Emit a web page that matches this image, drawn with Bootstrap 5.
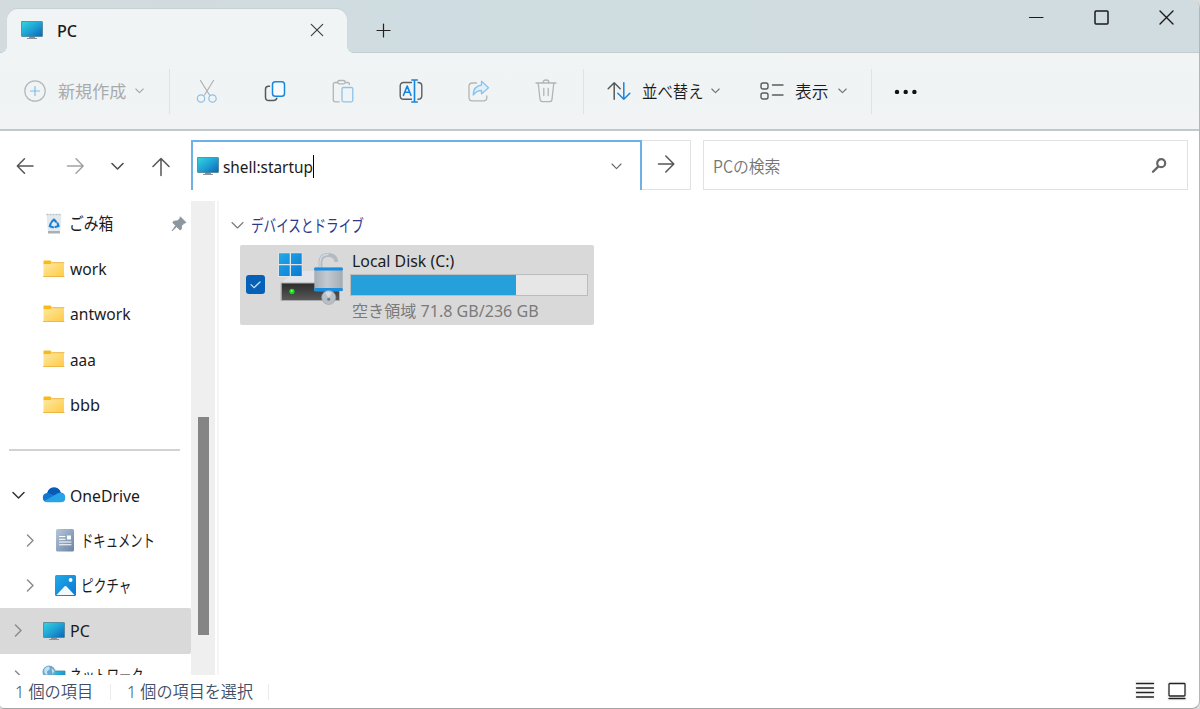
<!DOCTYPE html>
<html lang="ja">
<head>
<meta charset="utf-8">
<meta name="viewport" content="width=device-width, initial-scale=1">
<title>PC</title>
<link href="https://cdn.jsdelivr.net/npm/bootstrap@5.3.0/dist/css/bootstrap.min.css" rel="stylesheet">
<style>
  html, body { height: 100%; }
  body { font: 16px/1 "Noto Sans", "Noto Sans CJK JP", sans-serif; color: #1b1b1b; background: #dcdcdc; overflow: hidden; }
  svg { display: block; flex: none; fill: none; stroke-linecap: round; stroke-linejoin: round; }
  .window { width: 1200px; height: 709px; border-right: 1px solid #b4b6b7; border-bottom: 1px solid #a3a3a3; border-radius: 0 8px 8px 4px; }
  .jp { font-family: "Noto Sans CJK JP", sans-serif; font-size: 17px; }
  .label { display: block; flex: none; white-space: nowrap; transform: scaleX(var(--sx, .955)); transform-origin: 0 50%; width: 0; line-height: 24px; }

  .titlebar { height: 53px; background: linear-gradient(90deg, #d3dbde, #cfdce1 35%, #d1dce0); box-shadow: inset 0 -1px #c3cdd1; }
  .tab { position: relative; width: 340px; height: 44px; margin: 9px 0 0 7px; background: #f0f4f5; border-radius: 11px 11px 0 0; box-shadow: 0 -1px 1px #c6d0d3; }
  .tab::before, .tab::after { content: ""; position: absolute; bottom: 0; width: 6px; height: 6px; }
  .tab::before { left: -6px; background: radial-gradient(circle at 0 0, transparent 5.5px, #f0f4f5 6px); }
  .tab::after { right: -6px; background: radial-gradient(circle at 100% 0, transparent 5.5px, #f0f4f5 6px); }

  .toolbar { height: 78px; background: linear-gradient(#f0f4f5, #f1f3f4); border-bottom: 2px solid #c2c9cc; }
  .slot { width: 67.9px; display: flex; justify-content: center; }
  .rule { width: 1px; height: 45px; background: #dfe3e4; flex: none; }

  .addressrow { height: 70px; }
  .address { width: 451px; height: 50px; border: 2px solid #6cb1e8; border-bottom: 0; }
  .go { width: 49px; height: 50px; border: 1px solid #e2e2e2; border-left: 0; }
  .search { width: 485px; height: 50px; border: 1px solid #e2e2e2; }
  .caret { width: 1px; height: 23px; background: #000; }

  .main { height: 474px; }
  .sidebar { width: 191px; }
  .item { height: 45.25px; flex: none; display: flex; align-items: center; }
  .item.active { background: #d9d9d9; border-radius: 0 2px 2px 0; width: 190.5px; }
  .track { width: 24px; background: #efefef; }
  .thumb { width: 11px; height: 218px; margin: 216px 0 0 6.5px; background: #858585; }
  .splitter { width: 2px; margin-left: 2px; background: #f5f5f5; }
  .drive { width: 354px; height: 80px; margin-left: 21px; background: #d9d9d9; border-radius: 2px; }
  .meter { width: 238px; height: 22px; border: 1px solid #bcbcbc; background: #e6e6e6; border-radius: 0; }
  .meter .progress-bar { background: #26a0da; }
  .status { height: 33px; color: #3c4e68; }
  .status .label { font-size: 16.5px; font-weight: 350; }
  .status .rule { height: 16px; background: #ececec; }
</style>
</head>
<body>
<svg width="0" height="0" class="position-absolute">
  <defs>
    <linearGradient id="screen" x1="0" y1="0" x2="1" y2="1"><stop stop-color="#35d5e0"/><stop offset=".5" stop-color="#1fa2d4"/><stop offset="1" stop-color="#0b63b8"/></linearGradient>
    <linearGradient id="fold" x1="0" y1="0" x2="1" y2="1"><stop stop-color="#ffe9a4"/><stop offset="1" stop-color="#fecb45"/></linearGradient>
    <linearGradient id="win" x1="0" y1="0" x2="1" y2="1"><stop stop-color="#22aae8"/><stop offset="1" stop-color="#0a78d4"/></linearGradient>
    <linearGradient id="body" x1="0" y1="0" x2="0" y2="1"><stop stop-color="#2c2c2c"/><stop offset="1" stop-color="#5a5a5a"/></linearGradient>
    <linearGradient id="steel" x1="0" y1="0" x2="1" y2="0"><stop stop-color="#a5adb6"/><stop offset=".45" stop-color="#c3cad2"/><stop offset="1" stop-color="#a2abb4"/></linearGradient>
    <linearGradient id="doc" x1="0" y1="0" x2="1" y2="1"><stop stop-color="#b5c6da"/><stop offset="1" stop-color="#6984a5"/></linearGradient>
    <symbol id="pc" viewBox="0 0 22 18"><path d="M8 15h6v2h2v1H6v-1h2z" fill="#8b9399"/><rect x=".5" y=".5" width="21" height="15" rx=".6" fill="url(#screen)" stroke="#4d8196" stroke-width=".8"/></symbol>
    <symbol id="folder" viewBox="0 0 22 18"><path d="M.5 3V1.500Q.5.500 1.500.500H7Q8.500.500 8.500 2V5H.5z" fill="#f9b916"/><path d="M.5 4H8L9.500 2.500H21V16.500H.5z" fill="url(#fold)"/><path d="M9 2.700H21M.5 16.500H21" stroke="#e9b23c" stroke-width=".9"/></symbol>
  </defs>
</svg>

<div class="window bg-white overflow-hidden d-flex flex-column">
  <header class="titlebar d-flex flex-shrink-0">
    <div class="tab d-flex align-items-center">
      <svg width="22" height="18" style="margin:0 0 2px 14px"><use href="#pc"/></svg>
      <span class="label fw-medium" style="margin:0 0 1px 14px;--sx:1.01">PC</span>
      <svg width="14" height="14" viewBox="0 0 14 14" class="ms-auto" style="margin:0 23px 2px 0" stroke="#3e4142" stroke-width="1.200"><path d="M1.300 1.300 12.700 12.700M12.700 1.300 1.300 12.700"/></svg>
    </div>
    <svg width="15" height="15" viewBox="0 0 15 15" style="margin:23px 0 0 29px" stroke="#222" stroke-width="1.200"><path d="M7.500 1v13M1 7.500h13"/></svg>
    <div class="d-flex ms-auto" style="margin:10px 25px 0 0;gap:50.500px">
      <svg width="16" height="15" viewBox="0 0 16 15" stroke="#1a1a1a" stroke-width="1.200"><path d="M1.500 7.500h13.500"/></svg>
      <svg width="15" height="15" viewBox="0 0 15 15" stroke="#1a1a1a" stroke-width="1.500" style="margin-left:-1px"><rect x="1" y="1" width="13" height="13" rx="1"/></svg>
      <svg width="15" height="15" viewBox="0 0 15 15" stroke="#1a1a1a" stroke-width="1.400"><path d="m1 1 13 13M14 1 1 14"/></svg>
    </div>
  </header>

  <nav class="toolbar d-flex align-items-center flex-shrink-0">
    <svg width="22" height="22" viewBox="0 0 22 22" style="margin-left:24px" stroke-width="1.200"><circle cx="11" cy="11" r="10.200" stroke="#b4b7b8"/><path d="M11 6.500v9M6.500 11h9" stroke="#7fbdec"/></svg>
    <span class="label jp" style="margin-left:12px;--sx:1.005;color:#a8abac">新規作成</span>
    <svg width="9" height="6" viewBox="0 0 9 6" style="margin-left:77px" stroke="#a5a8a9" stroke-width="1.100"><path d="M.8 1 4.500 4.700 8.200 1"/></svg>
    <div class="rule" style="margin-left:25px"></div>
    <div class="d-flex" style="margin-left:3px">
      <div class="slot"><svg width="22" height="26" viewBox="0 0 22 26" stroke-width="1.200"><path d="m4.500 2.500 9 14.500M17.500 2.500 8.500 17" stroke="#aeb1b2"/><circle cx="5" cy="20.500" r="3.700" stroke="#87c0ea"/><circle cx="16.500" cy="20.500" r="3.700" stroke="#87c0ea"/></svg></div>
      <div class="slot"><svg width="22" height="26" viewBox="0 0 22 26" stroke-width="1.500"><path d="M5.500 8.200h-1Q1.500 8.200 1.500 11.200v8q0 3.300 3.300 3.300h4.500q3 0 3.500-2.300" stroke="#555859"/><rect x="8.500" y="3.800" width="12" height="14.500" rx="2.800" fill="#f6fbff" stroke="#1987dc"/></svg></div>
      <div class="slot"><svg width="22" height="26" viewBox="0 0 22 26" stroke-width="1.300"><path d="M5.700 4.500H3.300Q1.300 4.500 1.300 6.500V21.800q0 2 2 2h4M13.500 4.500h2.200q1.700 0 1.700 2" stroke="#b2b5b6"/><rect x="5.700" y="2.500" width="7.500" height="3.300" rx="1.600" stroke="#b2b5b6"/><rect x="10" y="9.500" width="10.800" height="14.300" rx="1.500" stroke="#8bc3eb"/></svg></div>
      <div class="slot"><svg width="24" height="26" viewBox="0 0 24 26" stroke-width="1.400"><path d="M12.500 4.500H4.700Q1.200 4.500 1.200 8V17.700Q1.200 21.200 4.700 21.200H12.500M19 4.500q3.800 0 3.800 3.500V17.700q0 3.500-3.800 3.500" stroke="#5c5f60"/><path d="m4.500 17.300 3.700-9.300 3.700 9.300M5.800 14.200h4.800M12.800 2h5.500M15.500 2v22M12.800 24h5.500" stroke="#1685dd" stroke-width="1.600"/></svg></div>
      <div class="slot"><svg width="22" height="26" viewBox="0 0 22 26" stroke-width="1.300"><path d="M8.500 5H4.300Q1 5 1 8.300V19.500q0 3.300 3.300 3.300H15.500q3.300 0 3.300-3.300V18" stroke="#b2b5b6"/><path d="M13.500 3.200 20.500 9.800 13.500 15.900V12.500q-5 0-8.300 4.500Q5.300 8.200 13.500 7z" fill="#e3eff8" stroke="#8bc3eb"/></svg></div>
      <div class="slot"><svg width="22" height="26" viewBox="0 0 22 26" stroke-width="1.300" stroke="#b2b5b6"><path d="M1 5h20M3.200 5l1.800 16.300q.3 2.400 2.500 2.400h7q2.200 0 2.500-2.400L18.800 5M8 4.800q0-2.800 3-2.800t3 2.800M8.800 10.500v7M13.200 10.500v7"/></svg></div>
    </div>
    <div class="rule" style="margin-left:3px"></div>
    <svg width="24" height="20" viewBox="0 0 24 20" style="margin-left:23px" stroke-width="1.500"><path d="M7.200 18.300V1.800M1.200 7.800 7.200 1.800l6 6" stroke="#565a5b"/><path d="M16.800 1.800v16.500M10.800 12.300l6 6 6-6" stroke="#1685dd"/></svg>
    <span class="label jp" style="margin-left:11px;--sx:.905;font-weight:350">並べ替え</span>
    <svg width="9" height="6" viewBox="0 0 9 6" style="margin-left:69px" stroke="#707374" stroke-width="1.100"><path d="M.8 1 4.500 4.700 8.200 1"/></svg>
    <svg width="24" height="20" viewBox="0 0 24 20" style="margin-left:40px" stroke="#595c5d" stroke-width="1.400"><rect x="1" y="2" width="7" height="6" rx="2"/><rect x="1" y="12" width="7" height="6" rx="2"/><path d="M12.500 4h10.500M12.500 14h10.500"/></svg>
    <span class="label jp" style="margin-left:11px;--sx:.98;font-weight:350">表示</span>
    <svg width="9" height="6" viewBox="0 0 9 6" style="margin-left:43px" stroke="#707374" stroke-width="1.100"><path d="M.8 1 4.500 4.700 8.200 1"/></svg>
    <div class="rule" style="margin-left:24px"></div>
    <svg width="24" height="6" viewBox="0 0 24 6" style="margin-left:22px"><g fill="#111"><circle cx="3" cy="4" r="2.200"/><circle cx="11.700" cy="4" r="2.200"/><circle cx="20.400" cy="4" r="2.200"/></g></svg>
  </nav>

  <div class="addressrow d-flex flex-shrink-0">
    <div class="d-flex align-items-center" style="height:70px;width:191px" >
      <svg width="19" height="18" viewBox="0 0 19 18" style="margin-left:16px" stroke="#555" stroke-width="1.500"><path d="M17 9H1.500M8.500 1.800 1.300 9l7.200 7.200"/></svg>
      <svg width="19" height="18" viewBox="0 0 19 18" style="margin-left:31px" stroke="#a2a2a2" stroke-width="1.500"><path d="M1.500 9H17M10 1.800 17.200 9l-7.200 7.200"/></svg>
      <svg width="13" height="9" viewBox="0 0 13 9" style="margin-left:26px" stroke="#4f4f4f" stroke-width="1.600"><path d="m1 1.500 5.500 5.500L12 1.500"/></svg>
      <svg width="18" height="20" viewBox="0 0 18 20" style="margin:2px 0 0 28px" stroke="#555" stroke-width="1.500"><path d="M9 18.500V1.500M1 9.500l8-8 8 8"/></svg>
    </div>
    <div class="d-flex" style="margin-top:9px">
      <div class="address d-flex align-items-center">
        <svg width="22" height="18" style="margin-left:4px"><use href="#pc"/></svg>
        <span class="label" style="margin-left:4px;margin-top:2px;--sx:.96">shell:startup</span>
        <span class="caret" style="margin-left:90px"></span>
        <svg width="11" height="7" viewBox="0 0 11 7" class="ms-auto" style="margin-right:18px" stroke="#666" stroke-width="1.100"><path d="m1 1 4.500 4.700L10 1"/></svg>
      </div>
      <div class="go d-flex align-items-center">
        <svg width="18" height="20" viewBox="0 0 18 20" style="margin:0 0 2px 15px" stroke="#555" stroke-width="1.500"><path d="M1.500 10H16.500M8.800 2l8 8-8 8"/></svg>
      </div>
      <div class="search d-flex align-items-center" style="margin-left:12px">
        <span class="label jp" style="margin:2px 0 0 9px;--sx:.93;color:#757575;font-weight:350">PCの検索</span>
        <svg width="17" height="17" viewBox="0 0 17 17" class="ms-auto" style="margin:1px 19px 0 0" stroke="#666"><circle cx="10.200" cy="6.200" r="4" stroke-width="2.200"/><path d="M7.200 9.600 2 14.800" stroke-width="2.300"/></svg>
      </div>
    </div>
  </div>

  <main class="main d-flex flex-shrink-0 overflow-hidden">
    <aside class="sidebar d-flex flex-column">
      <div class="item">
        <svg width="16" height="21" viewBox="0 0 16 21" style="margin-left:46px"><path d="M.5 2H15.500L14 20H2z" fill="#e4e9ed"/><path d="M2 18h12v2.500H2z" fill="#aab1b6"/><path d="M1 1.500h14" stroke="#bcc4c9" stroke-width="1.500" stroke-dasharray="1 2"/><path d="M5.800 8.800 8 6.500l2 2.300M11.600 10.300l1 2.800-3.200.8M7 14.300l-3.300-1 1.100-2.900" stroke="#1681d8" stroke-width="2.100"/></svg>
        <span class="label jp" style="margin:0 0 2px 7px;--sx:.87">ごみ箱</span>
        <svg width="16" height="16" viewBox="0 0 16 16" class="ms-auto" style="margin-right:4px"><path d="m9.500 1 5.500 5.500-2 .8-2.300 2.400-.4 3.500-1.300.8-3.300-3.300L1 15l3.600-5.500L1.700 6.500l1-1.300 3.700-.4 2.300-2z" fill="#8b969f" stroke="#8b969f" stroke-width=".8"/></svg>
      </div>
      <div class="item"><svg width="22" height="18" style="margin-left:43px"><use href="#folder"/></svg><span class="label" style="margin-left:5px;--sx:.98">work</span></div>
      <div class="item"><svg width="22" height="18" style="margin-left:43px"><use href="#folder"/></svg><span class="label" style="margin-left:5px;--sx:.975">antwork</span></div>
      <div class="item"><svg width="22" height="18" style="margin-left:43px"><use href="#folder"/></svg><span class="label" style="margin:1px 0 0 5px">aaa</span></div>
      <div class="item"><svg width="22" height="18" style="margin-left:43px"><use href="#folder"/></svg><span class="label" style="margin-left:5px;--sx:1.02">bbb</span></div>
      <div class="item"><div style="width:171px;height:2px;margin-left:9px;background:#d2d2d2"></div></div>
      <div class="item">
        <svg width="13" height="9" viewBox="0 0 13 9" style="margin-left:12px" stroke="#333" stroke-width="1.500"><path d="m1 1.500 5.500 5.500L12 1.500"/></svg>
        <svg width="24" height="16" viewBox="0 0 24 16" style="margin-left:17px"><path d="M5.500 15Q.8 15 .8 10.500.8 6.500 5 6 7 .6 12 .6q5 0 6.700 4.900Q23 6 23 10.500 23 15 18.500 15z" fill="#1277d1"/><path d="M5.500 5.500Q7.500.6 12 .6q5 0 6.700 4.900l-5 3.500z" fill="#0a5bb5"/><path d="M2.500 14 14 7.300q3-1.900 6-1.300 3.200 1 3.200 4.700 0 4.600-4.700 4.600h-13q-1.700 0-3-1.300z" fill="#29a3e8"/></svg>
        <span class="label" style="margin:1px 0 0 4px;--sx:.985">OneDrive</span>
      </div>
      <div class="item">
        <svg width="9" height="13" viewBox="0 0 9 13" style="margin-left:26px" stroke="#8c8c8c" stroke-width="1.500"><path d="m1.500 1 5.500 5.500L1.500 12"/></svg>
        <svg width="18" height="23" viewBox="0 0 18 23" style="margin-left:21px"><rect width="18" height="22.500" rx="1.500" fill="url(#doc)"/><path d="M3.500 7.500H9M3.500 10.200H9M3.500 13h11.500M3.500 15.800h11.500" stroke="#fff" stroke-width="1.100"/><rect x="11" y="6.500" width="4" height="4" fill="#fff"/></svg>
        <span class="label jp" style="margin:0 0 1px 7px;--sx:.725">ドキュメント</span>
      </div>
      <div class="item">
        <svg width="9" height="13" viewBox="0 0 9 13" style="margin-left:26px" stroke="#8c8c8c" stroke-width="1.500"><path d="m1.500 1 5.500 5.500L1.500 12"/></svg>
        <svg width="21" height="21" viewBox="0 0 21 21" style="margin-left:20px"><rect width="21" height="21" rx="1.500" fill="url(#win)"/><path d="M1.500 20 9.700 11.300q.8-.8 1.600 0L19.500 20z" fill="#f4f9fd"/><circle cx="15.600" cy="5" r="1.900" fill="#fff"/></svg>
        <span class="label jp" style="margin:0 0 2px 5px;--sx:.745">ピクチャ</span>
      </div>
      <div class="item active">
        <svg width="9" height="13" viewBox="0 0 9 13" style="margin-left:14px" stroke="#8c8c8c" stroke-width="1.500"><path d="m1.500 1 5.500 5.500L1.500 12"/></svg>
        <svg width="22" height="18" style="margin-left:20px"><use href="#pc"/></svg>
        <span class="label" style="margin-left:5px;--sx:1">PC</span>
      </div>
      <div class="item">
        <svg width="9" height="13" viewBox="0 0 9 13" style="margin-left:14px" stroke="#8c8c8c" stroke-width="1.500"><path d="m1.500 1 5.500 5.500L1.500 12"/></svg>
        <svg width="24" height="22" viewBox="0 0 24 22" style="margin-left:19px"><rect x="7" y="6" width="16" height="12" fill="url(#screen)" stroke="#4d8196" stroke-width=".8"/><circle cx="7" cy="7" r="6.500" fill="#6aa9cf"/><path d="M2.500 4Q4 1 7 1.500L8 4 5 6.500 5.500 10Q1 9 2.500 4M9.500 3l3 3-2 3z" fill="#c5e1ee"/></svg>
        <span class="label jp" style="margin:0 0 2px 4px;--sx:.72">ネットワーク</span>
      </div>
    </aside>
    <div class="track"><div class="thumb"></div></div>
    <div class="splitter"></div>

    <section class="flex-grow-1">
      <div class="d-flex align-items-center" style="height:44px;padding:4px 0 0 12px">
        <svg width="13" height="9" viewBox="0 0 13 9" stroke="#777" stroke-width="1.100"><path d="m1 1.500 5.500 5.500L12 1.500"/></svg>
        <span class="label jp" style="margin:0 0 1px 7px;--sx:.74;color:#2c3a8c">デバイスとドライブ</span>
      </div>
      <div class="drive d-flex">
        <svg width="19" height="19" viewBox="0 0 19 19" style="margin:30px 0 0 6px"><rect width="19" height="19" rx="3" fill="#0560b8"/><path d="m5 9.700 3 3 6-5.700" stroke="#cfe3f5" stroke-width="1.200"/></svg>
        <svg width="66" height="54" viewBox="278 252 66 54" style="margin:7px 0 0 13px">
          <path d="M281.500 283 295 271h32l12.500 12z" fill="#e3e4ea"/>
          <rect x="281.500" y="283" width="58" height="17.500" fill="url(#body)" stroke="#a9abad"/>
          <circle cx="292" cy="291.400" r="2.600" fill="#12e012"/><circle cx="291.700" cy="291" r="1" fill="#8cff7a"/>
          <rect x="278" y="252.500" width="24.500" height="24.500" fill="#dfe6ea"/>
          <path d="M279 253.300h10.700V264H279zM291 253.300h10.700V264H291zM279 265.300h10.700V276H279zM291 265.300h10.700V276H291z" fill="url(#win)"/>
          <path d="M320.500 268v-5.500q0-7.500 7.500-7.500 8 0 8.300 7" stroke="#b3bbc2" stroke-width="3.800" stroke-linecap="butt"/><path d="M320 267v-4.500q0-8 8-8" stroke="#d3d9de" stroke-width="1.300"/>
          <rect x="314.300" y="267.300" width="28.400" height="24" rx="1" fill="url(#steel)"/>
          <path d="M315.500 269h26M315.500 289.500h26" stroke="#178ee2" stroke-width="3"/>
          <circle cx="328.700" cy="297.500" r="7" fill="#b7bfc7" stroke="#98a1aa" stroke-width=".6"/><path d="M325 293q3-3 7 0l-3.300 5z" fill="#d5dade"/><circle cx="328.700" cy="299.300" r="1.500" fill="#737b83"/>
        </svg>
        <div class="d-flex flex-column" style="margin:4px 0 0 6px">
          <span class="label" style="margin-left:2px;--sx:.99">Local Disk (C:)</span>
          <div class="progress meter" style="margin-top:1px"><div class="progress-bar" style="width:70%"></div></div>
          <span class="label" style="margin:3px 0 0 2px;--sx:1.005;color:#7b7b7b">空き領域 71.8 GB/236 GB</span>
        </div>
      </div>
    </section>
  </main>

  <footer class="status d-flex align-items-center">
    <span class="label" style="margin-left:15px;--sx:.98">1 個の項目</span>
    <div class="rule" style="margin-left:95px"></div>
    <span class="label" style="margin-left:16px;--sx:.975">1 個の項目を選択</span>
    <div class="rule" style="margin-left:141px"></div>
    <svg width="20" height="20" viewBox="0 0 20 20" class="ms-auto" style="margin-bottom:3px" stroke="#222" stroke-width="1.300"><rect width="20" height="20" fill="#f7f7f7" stroke="none"/><path d="M1.500 3.500h17M1.500 8h17M1.500 12.500h17M1.500 17h17"/></svg>
    <svg width="20" height="20" viewBox="0 0 20 20" style="margin:0 12px 2px 12px" stroke="#222" stroke-width="1.300"><rect width="20" height="20" fill="#f7f7f7" stroke="none"/><rect x="2" y="2.500" width="16" height="12.500" rx=".8" fill="#fff"/><path d="M2 17.500h16"/></svg>
  </footer>
</div>
<script src="https://cdn.jsdelivr.net/npm/bootstrap@5.3.0/dist/js/bootstrap.bundle.min.js"></script>
</body>
</html>
